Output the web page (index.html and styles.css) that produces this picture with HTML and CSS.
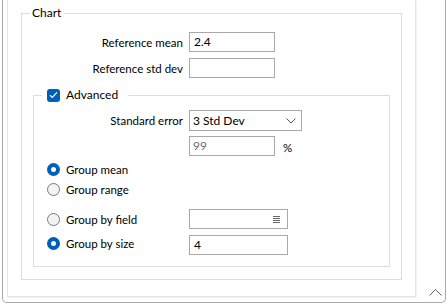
FILE: index.html
```html
<!DOCTYPE html>
<html lang="en">
<head>
  <meta charset="UTF-8">
  <title>Chart options</title>
  <link rel="stylesheet" href="styles.css">
</head>
<body>

<div class="frame">
  <div class="panel">
    <div class="group chart">
      <div class="group-title">Chart</div>

      <div class="form-row first">
        <span class="label">Reference mean</span>
        <div class="input w86">2.4</div>
      </div>
      <div class="form-row">
        <span class="label">Reference std dev</span>
        <div class="input w86"></div>
      </div>

      <div class="group advanced">
        <div class="group-title check-title">
          <span class="checkbox">
            <svg width="9" height="8" viewBox="0 0 9 8"><path d="M1 4.2 L3.4 6.4 L8 1.4" fill="none" stroke="#fff" stroke-width="1.2"/></svg>
          </span>
          Advanced
        </div>

        <div class="form-row select-row">
          <span class="label">Standard error</span>
          <div class="input select">
            <span>3 Std Dev</span>
            <svg width="10" height="6" viewBox="0 0 10 6"><path d="M0.5 0.5 L5 5 L9.5 0.5" fill="none" stroke="#555" stroke-width="1"/></svg>
          </div>
        </div>
        <div class="form-row pct-row">
          <span class="label"></span>
          <div class="input w86 disabled">99</div>
          <span class="unit">%</span>
        </div>

        <div class="radio-row mean-row">
          <span class="radio checked"></span>
          <span>Group mean</span>
        </div>
        <div class="radio-row">
          <span class="radio"></span>
          <span>Group range</span>
        </div>

        <div class="form-row field-row">
          <div class="radio-label">
            <span class="radio"></span>
            <span>Group by field</span>
          </div>
          <div class="input w99 picker">
            <svg width="7" height="7" viewBox="0 0 7 7"><path d="M0 0.5 H7 M0 2.5 H7 M0 4.5 H7 M0 6.5 H7" stroke="#666" stroke-width="1"/></svg>
          </div>
        </div>
        <div class="form-row size-row">
          <div class="radio-label">
            <span class="radio checked"></span>
            <span>Group by size</span>
          </div>
          <div class="input w99">4</div>
        </div>
      </div>
    </div>
  </div>

  <div class="side">
    <svg width="13" height="7" viewBox="0 0 13 7"><path d="M0.5 6.5 L6.5 0.5 L12.5 6.5" fill="none" stroke="#666" stroke-width="1"/></svg>
  </div>
</div>

</body>
</html>
```

FILE: styles.css
```css
body {
  margin: 0;
  background: #fff;
  font-family: 'Segoe UI', 'Lato', sans-serif;
  font-size: 11.5px;
  color: #000;
}

.frame {
  display: flex;
  align-items: flex-start;
  margin-left: 2px;
  width: 442px;
  height: 302px;
  border: 1px solid #a9a9a9;
  border-top: none;
  border-radius: 0 0 5px 5px;
}

.panel {
  margin-left: 4px;
  width: 381px;
  padding: 13px 13px 16px 13px;
  border-left: 1px solid #e6e6e6;
  border-right: 1px solid #e3e3e3;
  border-bottom: 1px solid #e3e3e3;
  box-shadow: 1px 1px 0 #f2f2f2;
}

.side {
  flex: 1;
  align-self: stretch;
  display: flex;
  align-items: flex-end;
  justify-content: flex-end;
  padding: 0 3px 6px 0;
}

/* group boxes */
.group {
  border: 1px solid #dcdcdc;
}

.chart {
  padding-bottom: 12px;
}

.advanced {
  margin: 17px 11px 0 11px;
  padding-bottom: 11px;
}

.group-title {
  width: fit-content;
  height: 16px;
  line-height: 16px;
  margin: -9px 0 0 8px;
  padding: 0 3px 0 2px;
  background: #fff;
  font-size: 12px;
}

.check-title {
  display: flex;
  align-items: center;
  gap: 6px;
  height: 14px;
  line-height: 14px;
  margin-top: -8px;
  padding: 0 10px 0 5px;
}

.checkbox {
  width: 13px;
  height: 13px;
  border-radius: 3px;
  background: #005fb8;
  display: flex;
  align-items: center;
  justify-content: center;
}

/* rows */
.form-row {
  display: flex;
  align-items: center;
  gap: 6px;
  margin-top: 6px;
}

.form-row.first {
  margin-top: 11px;
}

.form-row .label {
  width: 161px;
  text-align: right;
}

.advanced .form-row .label {
  width: 149px;
}

.select-row {
  margin-top: 8px !important;
}

.pct-row {
  margin-top: 5px !important;
}

.unit {
  margin-left: 2px;
  padding-top: 3px;
}

.input {
  box-sizing: border-box;
  height: 20px;
  border: 1px solid #a8a8a8;
  padding: 0 4px;
  line-height: 18px;
  display: flex;
  align-items: center;
  font-size: 12px;
}

.w86 {
  width: 86px;
}

.w99 {
  width: 99px;
}

.select {
  width: 113px;
  height: 21px;
  padding: 0 5px 0 3px;
  justify-content: space-between;
}

.disabled {
  color: #6d6d6d;
  padding-left: 3px;
}

.picker {
  justify-content: flex-end;
  padding-right: 7px;
}

/* radios */
.radio-row,
.radio-label {
  display: flex;
  align-items: center;
  gap: 6px;
  height: 20px;
  padding-left: 13px;
}

.mean-row {
  margin-top: 3px;
}

.radio-label {
  width: 136px;
}

.field-row {
  margin-top: 10px;
}

.size-row .radio-label {
  align-self: flex-start;
  height: 14px;
  margin-top: 1px;
}

.radio {
  box-sizing: border-box;
  width: 13px;
  height: 13px;
  border-radius: 50%;
  border: 1px solid #7a7a7a;
  background: #f3f3f3;
}

.radio.checked {
  border: 4px solid #005fb8;
  background: #fff;
}
```
